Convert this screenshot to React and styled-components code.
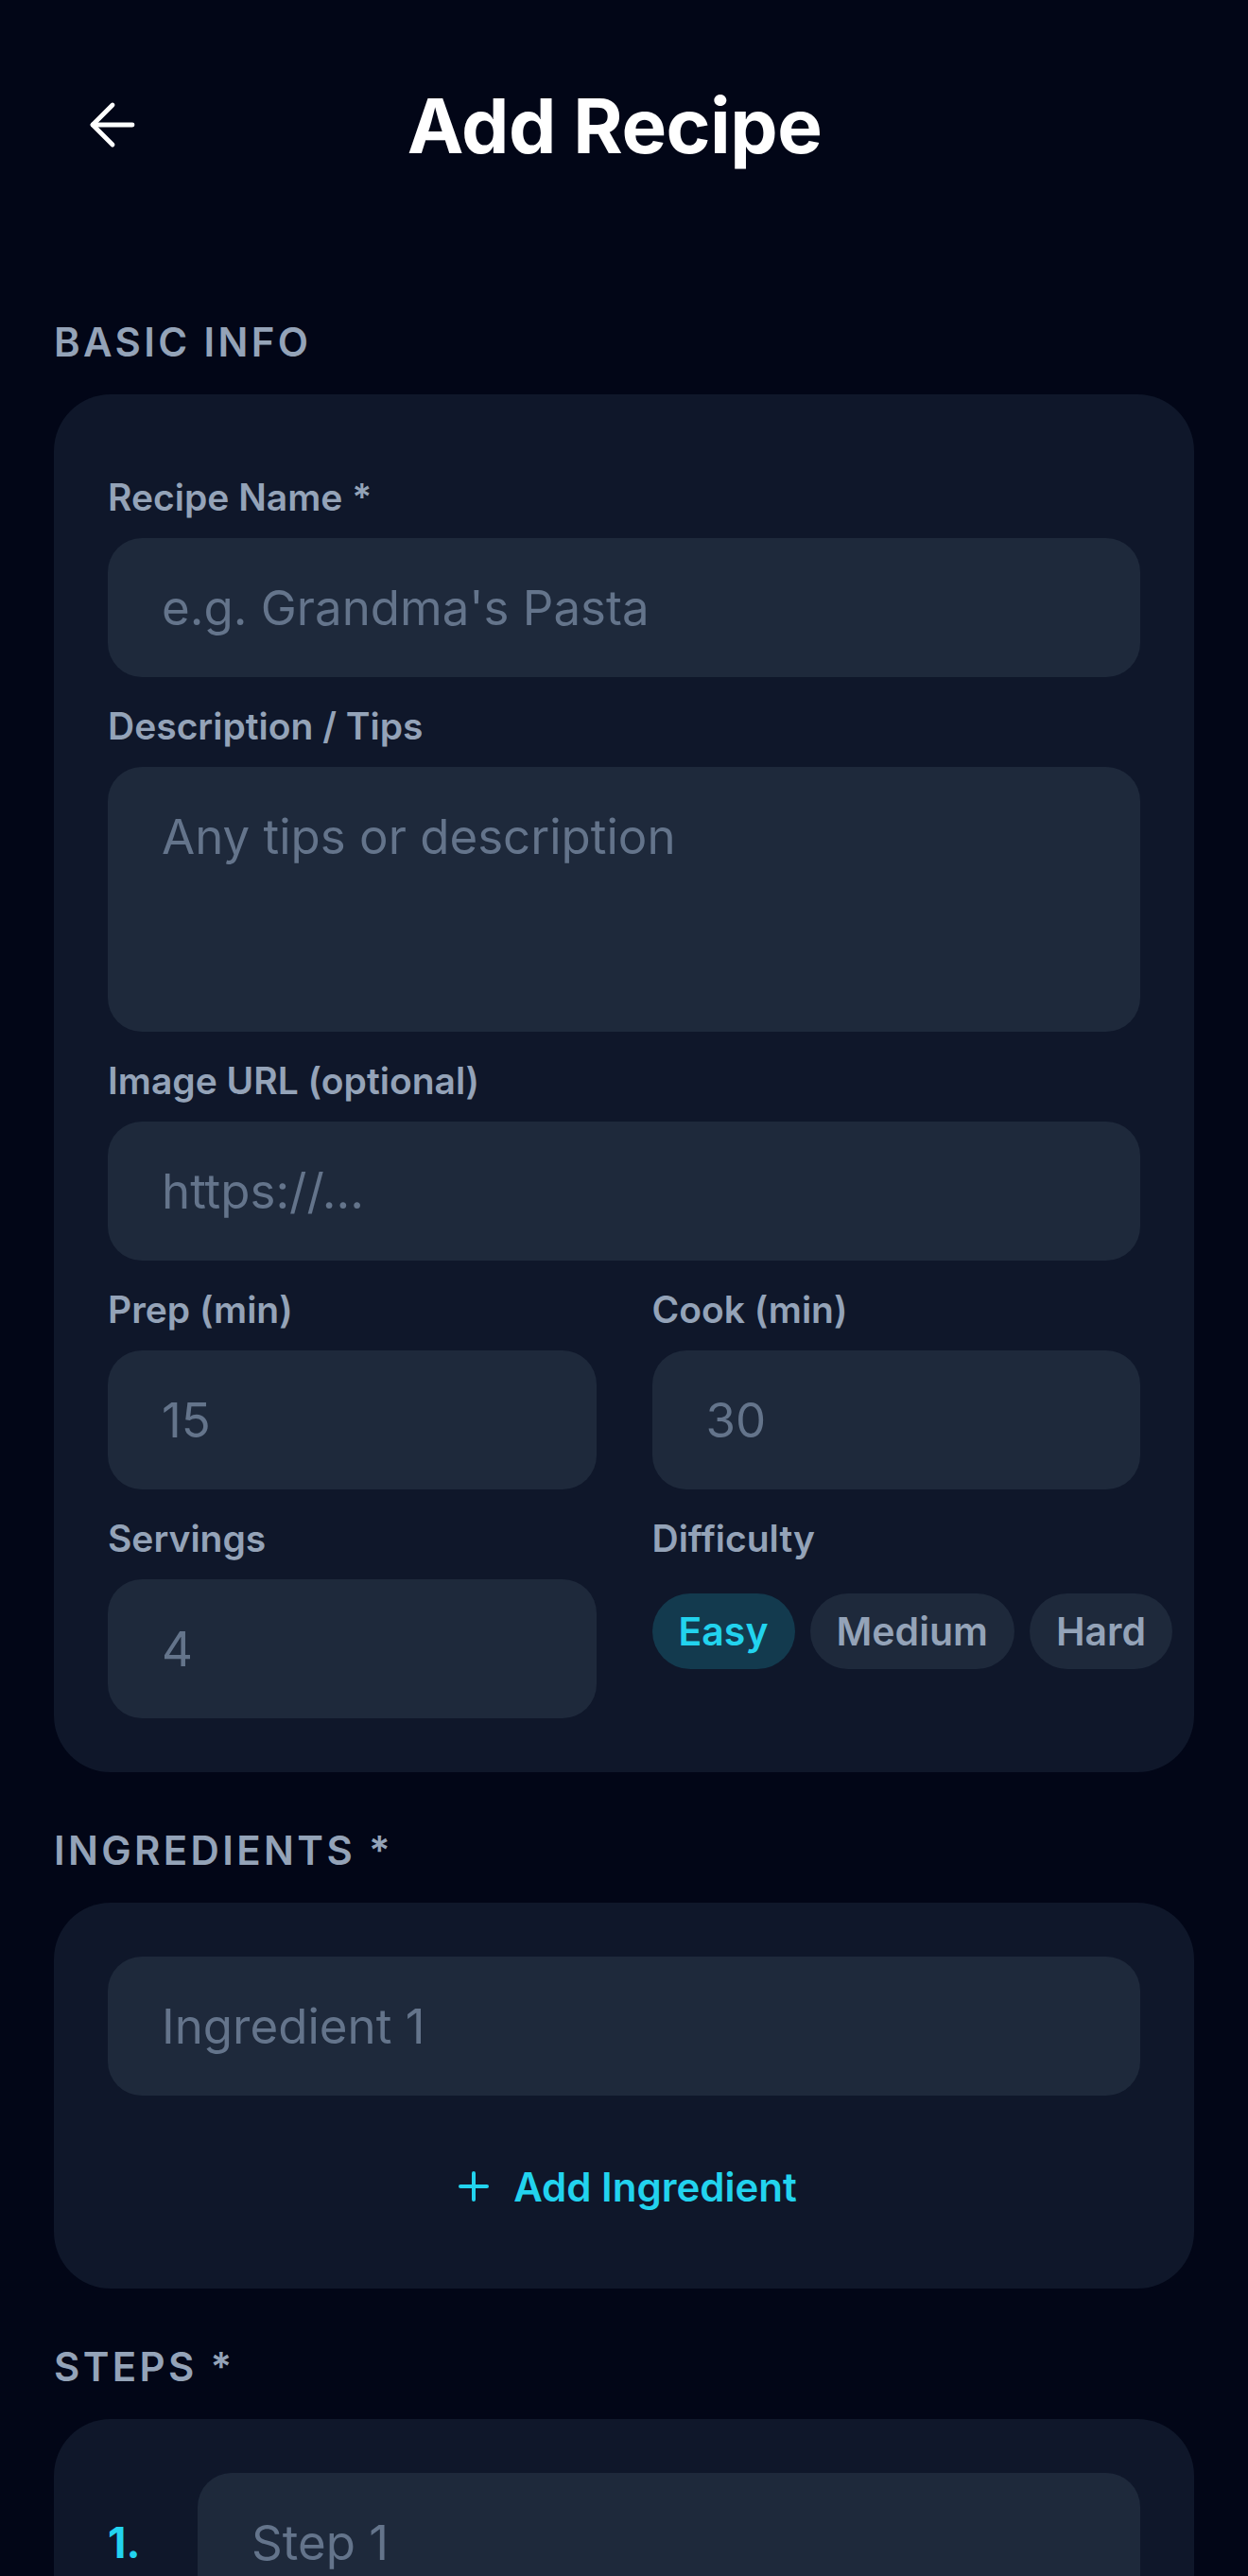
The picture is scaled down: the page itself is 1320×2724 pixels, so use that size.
import styled, { createGlobalStyle } from 'styled-components'
import { useState } from 'react'
import { ArrowLeft, Plus } from 'lucide-react'

const GlobalStyle = createGlobalStyle`
  * {
    box-sizing: border-box;
  }
  body {
    margin: 0;
    background: #020617;
    font-family: Inter, "Noto Sans", "Liberation Sans", sans-serif;
    color: #e2e8f0;
  }
`;

const difficulties = ["Easy", "Medium", "Hard"];

const AddRecipe = () => {
  const [difficulty, setDifficulty] = useState("Easy");
  const [ingredients, setIngredients] = useState([""]);
  const [steps, setSteps] = useState([""]);

  return (
    <Screen>
      <Header>
        <BackButton aria-label="Back">
          <ArrowLeft size={72} strokeWidth={1.6} />
        </BackButton>
        <Title>Add Recipe</Title>
        <div />
      </Header>

      <Content>
        <Section>
          <SectionTitle>Basic Info</SectionTitle>
          <Card>
            <Field>
              <Label>Recipe Name *</Label>
              <Input placeholder="e.g. Grandma's Pasta" />
            </Field>
            <Field>
              <Label>Description / Tips</Label>
              <TextArea placeholder="Any tips or description" />
            </Field>
            <Field>
              <Label>Image URL (optional)</Label>
              <Input placeholder="https://..." />
            </Field>
            <Row>
              <Field>
                <Label>Prep (min)</Label>
                <Input placeholder="15" />
              </Field>
              <Field>
                <Label>Cook (min)</Label>
                <Input placeholder="30" />
              </Field>
            </Row>
            <Row>
              <Field>
                <Label>Servings</Label>
                <Input placeholder="4" />
              </Field>
              <Field>
                <Label>Difficulty</Label>
                <ChipRow>
                  {difficulties.map((d) => (
                    <Chip
                      key={d}
                      $active={difficulty === d}
                      onClick={() => setDifficulty(d)}
                    >
                      {d}
                    </Chip>
                  ))}
                </ChipRow>
              </Field>
            </Row>
          </Card>
        </Section>

        <Section>
          <SectionTitle>Ingredients *</SectionTitle>
          <Card>
            <List>
              {ingredients.map((item, i) => (
                <Input key={i} placeholder={"Ingredient " + (i + 1)} />
              ))}
            </List>
            <AddButton onClick={() => setIngredients([...ingredients, ""])}>
              <Plus size={48} strokeWidth={2} />
              Add Ingredient
            </AddButton>
          </Card>
        </Section>

        <Section>
          <SectionTitle>Steps *</SectionTitle>
          <Card>
            <List>
              {steps.map((step, i) => (
                <StepRow key={i}>
                  <StepNumber>{i + 1}.</StepNumber>
                  <Input placeholder={"Step " + (i + 1)} />
                </StepRow>
              ))}
            </List>
            <AddButton onClick={() => setSteps([...steps, ""])}>
              <Plus size={48} strokeWidth={2} />
              Add Step
            </AddButton>
          </Card>
        </Section>
      </Content>
    </Screen>
  );
};

export default function App() {
  return (
    <>
      <GlobalStyle />
      <AddRecipe />
    </>
  );
}

const Screen = styled.div`
  width: 1320px;
  height: 2724px;
  overflow: hidden;
  background: #020617;
`;

const Header = styled.header`
  display: grid;
  grid-template-columns: 124px 1fr 144px;
  align-items: center;
  height: 132px;
  margin: 66px 57px 0;
`;

const BackButton = styled.button`
  display: flex;
  align-items: center;
  justify-content: center;
  width: 124px;
  height: 124px;
  padding: 0;
  border: none;
  background: none;
  color: #ffffff;
  cursor: pointer;
`;

const Title = styled.h1`
  margin: 0;
  text-align: center;
  font-size: 80px;
  font-weight: 700;
  letter-spacing: -0.5px;
  color: #ffffff;
`;

const Content = styled.main`
  padding: 139px 57px 0;
`;

const Section = styled.section`
  margin-bottom: 58px;
`;

const SectionTitle = styled.h2`
  margin: 0 0 30px;
  font-size: 42px;
  line-height: 50px;
  font-weight: 600;
  letter-spacing: 0.08em;
  text-transform: uppercase;
  color: #94a3b8;
`;

const Card = styled.div`
  background: #0f172a;
  border-radius: 60px;
  padding: 57px;
`;

const Field = styled.div`
  display: flex;
  flex-direction: column;
  min-width: 0;
  padding-top: 28px;
`;

const Row = styled.div`
  display: grid;
  grid-template-columns: 1fr 1fr;
  column-gap: 59px;
`;

const Label = styled.label`
  font-size: 39px;
  line-height: 47px;
  font-weight: 600;
  color: #94a3b8;
  margin-bottom: 20px;
`;

const Input = styled.input`
  width: 100%;
  height: 147px;
  padding: 0 57px;
  border: none;
  border-radius: 36px;
  background: #1e293b;
  color: #e2e8f0;
  font-family: inherit;
  font-size: 51px;
  outline: none;

  &::placeholder {
    color: #64748b;
  }
`;

const TextArea = styled.textarea`
  width: 100%;
  height: 280px;
  padding: 43px 57px;
  border: none;
  border-radius: 36px;
  background: #1e293b;
  color: #e2e8f0;
  font-family: inherit;
  font-size: 51px;
  line-height: 61px;
  resize: none;
  outline: none;

  &::placeholder {
    color: #64748b;
  }
`;

const ChipRow = styled.div`
  display: flex;
  gap: 16px;
  padding-top: 15px;
  white-space: nowrap;
`;

const Chip = styled.button`
  flex-shrink: 0;
  height: 80px;
  padding: 0 28px;
  border: none;
  border-radius: 40px;
  background: ${(p) => (p.$active ? "#133a4e" : "#1e293b")};
  color: ${(p) => (p.$active ? "#22d3ee" : "#94a3b8")};
  font-family: inherit;
  font-size: 41px;
  font-weight: 600;
  cursor: pointer;
`;

const List = styled.div`
  display: flex;
  flex-direction: column;
  gap: 28px;
`;

const AddButton = styled.button`
  display: flex;
  align-items: center;
  justify-content: center;
  gap: 18px;
  width: 100%;
  height: 102px;
  margin-top: 45px;
  padding: 0;
  border: none;
  background: none;
  color: #22d3ee;
  font-family: inherit;
  font-size: 42px;
  font-weight: 600;
  cursor: pointer;
`;

const StepRow = styled.div`
  display: flex;
  align-items: center;
  gap: 45px;
`;

const StepNumber = styled.span`
  flex: 0 0 50px;
  font-size: 45px;
  font-weight: 700;
  color: #22d3ee;
`;
